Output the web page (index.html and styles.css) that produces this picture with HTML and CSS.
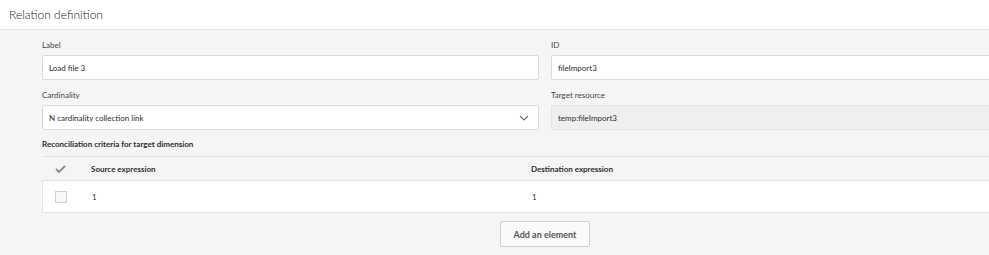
FILE: index.html
```html
<!DOCTYPE html>
<html lang="en">
<head>
  <meta charset="UTF-8" />
  <title>Relation definition</title>
  <link rel="stylesheet" href="styles.css">
</head>
<body>
  <div class="panel-header">
    <h1>Relation definition</h1>
  </div>

  <div class="form">
    <div class="form-grid">
      <div class="field">
        <label>Label</label>
        <div class="input">Load file 3</div>
      </div>
      <div class="field">
        <label>ID</label>
        <div class="input">fileImport3</div>
      </div>
      <div class="field">
        <label>Cardinality</label>
        <div class="input select">
          <span>N cardinality collection link</span>
          <svg class="chevron" width="10" height="6" viewBox="0 0 10 6">
            <path d="M1 1 L5 5 L9 1" fill="none" stroke="#6e6e6e" stroke-width="1.1" />
          </svg>
        </div>
      </div>
      <div class="field">
        <label>Target resource</label>
        <div class="input readonly">temp:fileImport3</div>
      </div>
    </div>

    <div class="section-title">Reconciliation criteria for target dimension</div>

    <div class="table">
      <div class="row head">
        <div class="cell check">
          <svg width="11" height="8" viewBox="0 0 11 8">
            <path d="M1 4 L4 7 L10 1" fill="none" stroke="#8a8a8a" stroke-width="1.8" />
          </svg>
        </div>
        <div class="cell">Source expression</div>
        <div class="cell">Destination expression</div>
      </div>
      <div class="row body">
        <div class="cell check"><span class="checkbox"></span></div>
        <div class="cell">1</div>
        <div class="cell">1</div>
      </div>
    </div>

    <div class="actions">
      <button class="btn">Add an element</button>
    </div>
  </div>
</body>
</html>
```

FILE: styles.css
```css
:root {
  --bg: #f5f5f5;
  --white: #ffffff;
  --text: #444;
  --text-dark: #2c2c2c;
  --border: #dadada;
  --line: #e3e3e3;
}

* {
  box-sizing: border-box;
}

body {
  margin: 0;
  background-color: var(--bg);
  font-family: Lato, sans-serif;
  color: var(--text);
  overflow: hidden;
}

.panel-header {
  background-color: var(--white);
  height: 30px;
  border-bottom: 1px solid var(--line);
  padding: 0 9px;
  display: flex;
  align-items: center;
}

h1 {
  margin: 0;
  font-size: 12px;
  font-weight: 300;
  color: #222;
}

.form {
  width: 1048px;
  padding: 8px 0 0 42px;
}

.form-grid {
  display: grid;
  grid-template-columns: 497px 497px;
  column-gap: 12px;
  row-gap: 8px;
}

.field label {
  display: block;
  font-size: 8px;
  line-height: 14px;
  margin-bottom: 3px;
  color: var(--text);
}

.input {
  height: 25px;
  border: 1px solid var(--border);
  border-radius: 2px;
  background-color: var(--white);
  padding: 0 6px;
  font-size: 8px;
  color: var(--text-dark);
  display: flex;
  align-items: center;
}

.input.select {
  justify-content: space-between;
  padding-right: 9px;
}

.input.readonly {
  background-color: #efefef;
  border-color: #e4e4e4;
}

.section-title {
  font-size: 8px;
  font-weight: 700;
  line-height: 14px;
  margin-top: 7px;
  color: var(--text-dark);
}

.table {
  margin-top: 5px;
}

.row {
  display: grid;
  grid-template-columns: 49px 440px 1fr;
  align-items: center;
}

.row.head {
  height: 25px;
  border-top: 1px solid var(--line);
  border-bottom: 1px solid var(--line);
  font-size: 8px;
  font-weight: 700;
  color: var(--text-dark);
}

.row.body {
  height: 32px;
  background-color: var(--white);
  border-bottom: 1px solid var(--line);
  border-left: 1px solid var(--line);
  font-size: 8px;
  color: var(--text-dark);
}

.cell.check {
  display: flex;
  padding-left: 13px;
}

.row.body .cell.check {
  padding-left: 12px;
}

.checkbox {
  display: block;
  width: 12px;
  height: 12px;
  border: 1px solid #d0d0d0;
  background-color: #f8f8f8;
}

.actions {
  display: flex;
  justify-content: center;
  margin-top: 8px;
}

.btn {
  width: 90px;
  height: 26px;
  border: 1px solid #d0d0d0;
  border-radius: 2px;
  background-color: #fafafa;
  font-family: Lato, sans-serif;
  font-size: 9px;
  font-weight: 700;
  color: #555;
  cursor: pointer;
}
```
